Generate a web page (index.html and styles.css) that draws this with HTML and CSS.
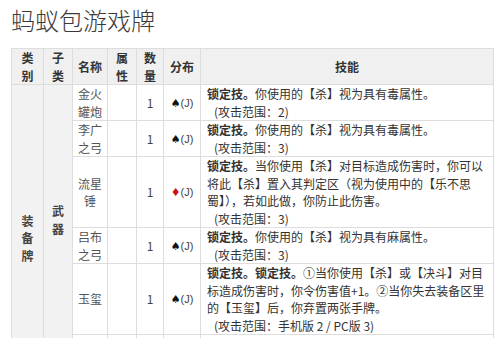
FILE: index.html
```html
<!DOCTYPE html>
<html lang="zh-CN">
<head>
<meta charset="utf-8">
<title>蚂蚁包游戏牌</title>
<link rel="stylesheet" href="styles.css">
</head>
<body>
<div class="page">
  <h1 class="title">蚂蚁包游戏牌</h1>
  <table class="cards">
    <colgroup>
      <col class="c-type"><col class="c-sub"><col class="c-name"><col class="c-attr"><col class="c-num"><col class="c-dist"><col class="c-skill">
    </colgroup>
    <thead>
      <tr>
        <th>类别</th><th>子类</th><th>名称</th><th>属性</th><th>数量</th><th>分布</th><th>技能</th>
      </tr>
    </thead>
    <tbody>
      <tr>
        <td class="group" rowspan="7">装备牌</td>
        <td class="group" rowspan="6">武器</td>
        <td class="name">金火罐炮</td><td></td><td class="num">1</td>
        <td class="dist"><span class="suit black">♠</span><span class="rank">(J)</span></td>
        <td class="skill"><b>锁定技。</b>你使用的【杀】视为具有毒属性。<span class="range">(攻击范围：2)</span></td>
      </tr>
      <tr>
        <td class="name">李广之弓</td><td></td><td class="num">1</td>
        <td class="dist"><span class="suit black">♠</span><span class="rank">(J)</span></td>
        <td class="skill"><b>锁定技。</b>你使用的【杀】视为具有毒属性。<span class="range">(攻击范围：3)</span></td>
      </tr>
      <tr>
        <td class="name">流星锤</td><td></td><td class="num">1</td>
        <td class="dist"><span class="suit red">♦</span><span class="rank">(J)</span></td>
        <td class="skill"><b>锁定技。</b>当你使用【杀】对目标造成伤害时，你可以将此【杀】置入其判定区（视为使用中的【乐不思蜀】），若如此做，你防止此伤害。<span class="range">(攻击范围：3)</span></td>
      </tr>
      <tr>
        <td class="name">吕布之弓</td><td></td><td class="num">1</td>
        <td class="dist"><span class="suit black">♠</span><span class="rank">(J)</span></td>
        <td class="skill"><b>锁定技。</b>你使用的【杀】视为具有麻属性。<span class="range">(攻击范围：3)</span></td>
      </tr>
      <tr>
        <td class="name">玉玺</td><td></td><td class="num">1</td>
        <td class="dist"><span class="suit black">♠</span><span class="rank">(J)</span></td>
        <td class="skill"><b>锁定技。锁定技。</b>①当你使用【杀】或【决斗】对目标造成伤害时，你令伤害值+1。②当你失去装备区里的【玉玺】后，你弃置两张手牌。<span class="range">(攻击范围：手机版 2 / PC版 3)</span></td>
      </tr>
      <tr>
        <td class="name">铜锤</td><td></td><td class="num">1</td>
        <td class="dist"><span class="suit black">♠</span><span class="rank">(J)</span></td>
        <td class="skill"><span class="range">(攻击范围：2)</span></td>
      </tr>
      <tr>
        <td class="group">防具</td>
        <td class="name">金甲</td><td></td><td class="num">1</td>
        <td class="dist"><span class="suit red">♥</span><span class="rank">(J)</span></td>
        <td class="skill"><b>锁定技。</b>你受到的伤害-1。<span class="range">(防具)</span></td>
      </tr>
    </tbody>
  </table>
</div>
</body>
</html>
```

FILE: styles.css
```css
html, body {
  margin: 0;
  padding: 0;
  background: #ffffff;
}

body {
  font-family: "Noto Sans CJK SC", "Noto Sans", sans-serif;
  color: #333333;
}

.page {
  padding: 4px 7px 0 11px;
}

.title {
  margin: 0;
  font-size: 24px;
  line-height: 32px;
  font-weight: 300;
  color: #3a3a3a;
}

.cards {
  margin-top: 12px;
  width: 482px;
  table-layout: fixed;
  border-collapse: collapse;
  font-size: 12px;
  line-height: 17.5px;
}

.c-type { width: 32px; }
.c-sub { width: 29px; }
.c-name { width: 35px; }
.c-attr { width: 29px; }
.c-num { width: 27px; }
.c-dist { width: 37px; }
.c-skill { width: 293px; }

.cards th,
.cards td {
  border: 1px solid #dddddd;
  padding: 0 5px;
  vertical-align: middle;
  text-align: center;
}

.cards th {
  background: #f0f0f0;
  font-weight: bold;
  color: #333333;
}

.cards td.group {
  background: #f2f2f2;
  font-weight: bold;
  color: #444444;
}

.cards td.name {
  color: #555555;
}

.cards td.num {
  color: #444444;
}

.dist {
  white-space: nowrap;
}

.suit {
  font-family: "DejaVu Sans", sans-serif;
  font-size: 11px;
}

.suit.black { color: #111111; }
.suit.red { color: #cc1111; }

.rank {
  font-family: "Liberation Sans", sans-serif;
  font-size: 11px;
  color: #444444;
}

.cards td.skill {
  text-align: left;
  padding: 0 6px;
  color: #333333;
}

.skill b {
  font-weight: bold;
  color: #333333;
}

.range {
  display: block;
  padding-left: 7px;
}
```
